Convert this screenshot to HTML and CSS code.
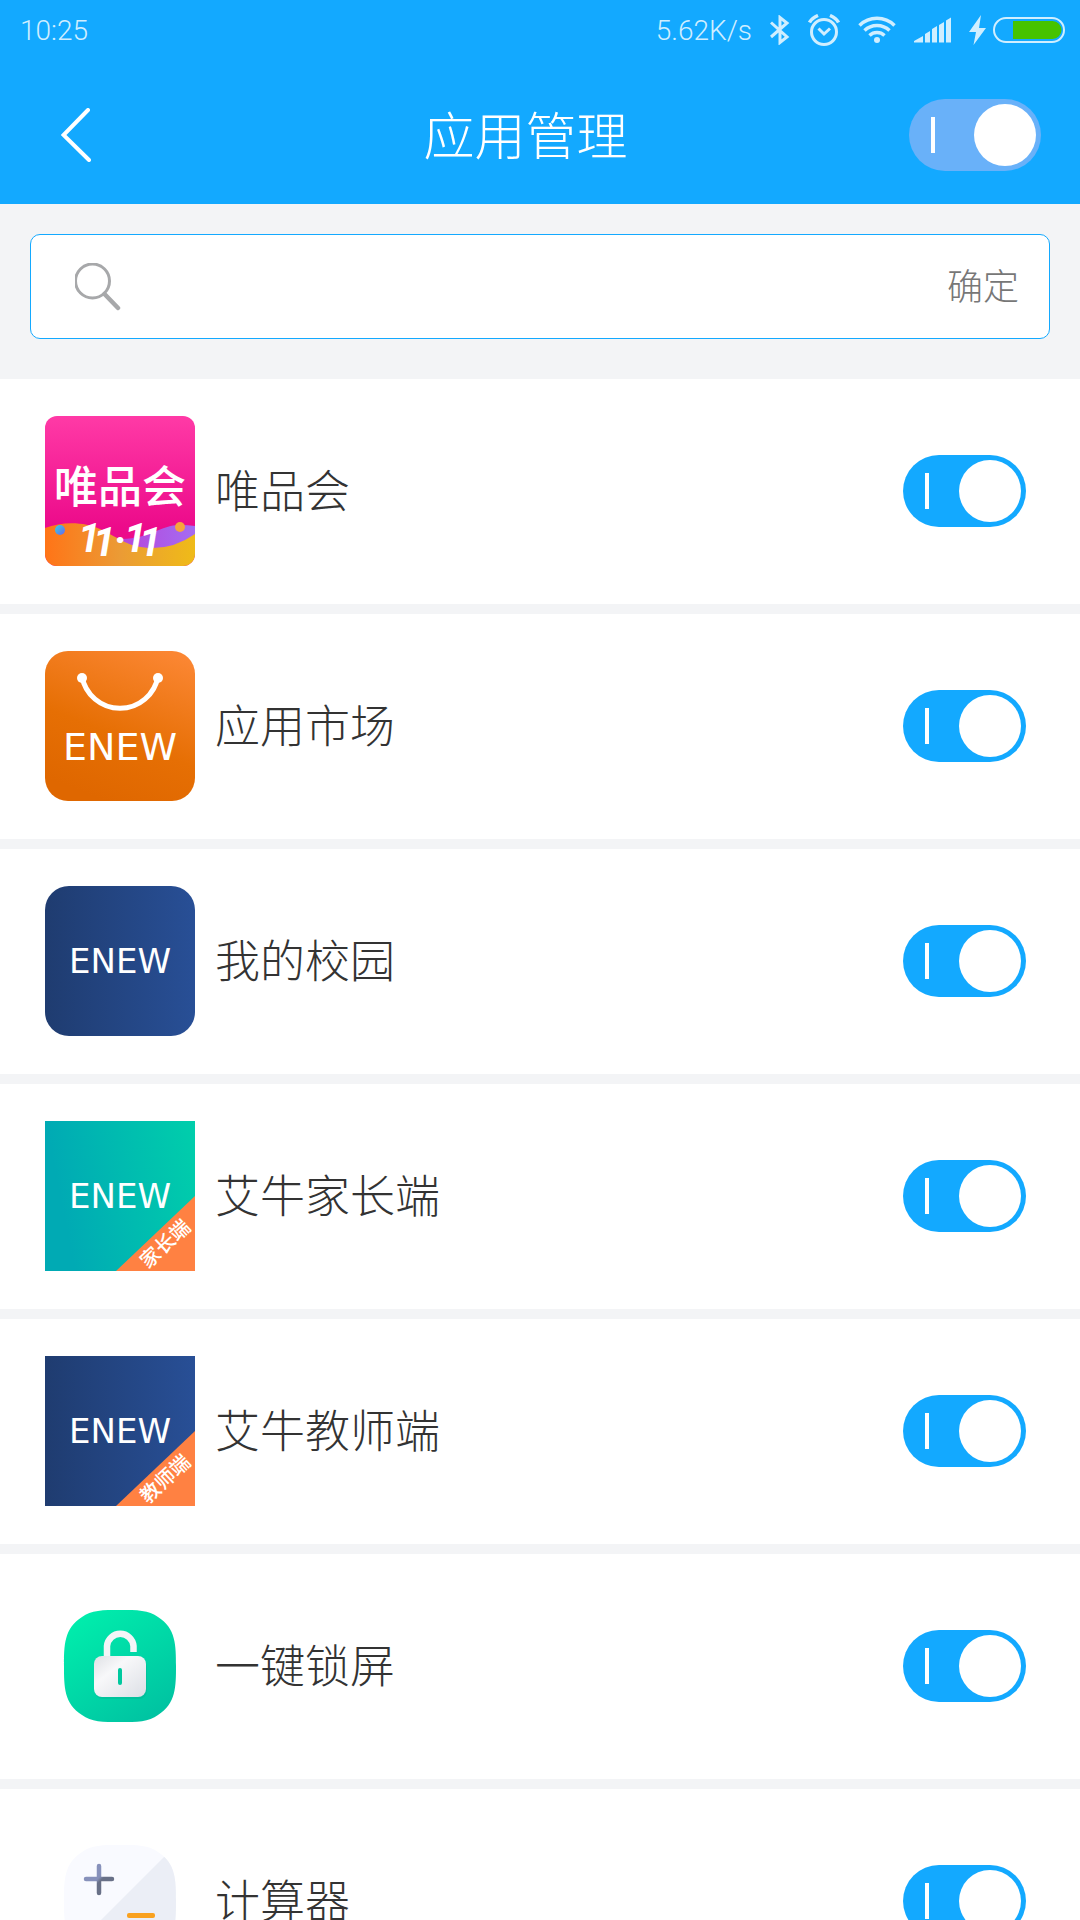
FILE: index.html
```html
<!DOCTYPE html>
<html lang="zh-CN">
<head>
<meta charset="utf-8">
<meta name="viewport" content="width=device-width, initial-scale=1">
<title>应用管理</title>
<link rel="stylesheet" href="styles.css">
</head>
<body>
<header class="top">
  <div class="status">
    <span>10:25</span>
    <div class="status-icons">
      <span>5.62K/s</span>
      <svg width="20" height="30" viewBox="0 0 20 30" fill="none" stroke="currentColor" stroke-width="3"><path d="M1 7.500 17 22 10 27.500V2.500L17 8 1 22"/></svg>
      <svg width="32" height="32" viewBox="0 0 32 32" fill="none" stroke="currentColor" stroke-width="3"><circle cx="16" cy="18" r="12.500"/><path d="M10.500 14.500 16 20l6-5.500"/><path d="M1.500 8.500Q4 4 10 1.500M30.500 8.500Q28 4 22 1.500" stroke-width="3.500"/></svg>
      <svg width="38" height="28" viewBox="0 0 38 28" fill="none" stroke="currentColor" stroke-width="3.500"><path d="M1.500 9.500a25 25 0 0 1 35 0M6.500 14.500a18 18 0 0 1 25 0M11.500 19.500a11 11 0 0 1 15 0"/><circle cx="19" cy="24" r="3" fill="currentColor" stroke="none"/></svg>
      <svg width="37" height="26" viewBox="0 0 37 26" fill="currentColor"><path d="M0 25.500V24l9-5v6.500zM11 17l5-3v11.500h-5zM18 12l5-3v16.500h-5zM25 8l5-3v20.500h-5zM32 3.500 37 .5v25h-5z"/></svg>
      <span class="power">
        <svg width="17" height="30" viewBox="0 0 17 30" fill="currentColor"><path d="M12 0 0 17h7L4.500 30 17 13h-7z"/></svg>
        <svg width="72" height="26" viewBox="0 0 72 26"><rect x="1" y="1" width="70" height="24" rx="12" fill="none" stroke="currentColor" stroke-width="2"/><path d="M20 4h39.500a9 9 0 0 1 0 18H20z" fill="#46c300"/></svg>
      </span>
    </div>
  </div>
  <div class="title-bar">
    <button class="back" type="button" aria-label="返回">
      <svg width="30" height="54" viewBox="0 0 30 54" fill="none" stroke="currentColor" stroke-width="4" stroke-linecap="round"><path d="M27 2 2.500 27 28 52"/></svg>
    </button>
    <h1>应用管理</h1>
    <input class="switch switch-all" type="checkbox" checked aria-label="应用管理">
  </div>
</header>

<form class="search">
  <label class="search-box">
    <svg width="46" height="48" viewBox="0 0 46 48" fill="none" stroke="#a7a8aa" stroke-linecap="round"><circle cx="17.500" cy="18" r="17" stroke-width="3"/><path d="m29.500 31 13.500 14" stroke-width="4.500"/></svg>
    <input type="search" aria-label="搜索应用">
    <button type="button">确定</button>
  </label>
</form>

<ul class="apps">
  <li>
    <svg class="icon" viewBox="0 0 150 150">
      <defs>
        <linearGradient id="pink" x2="0" y2="1"><stop stop-color="#ff3aa6"/><stop offset=".75" stop-color="#ec0a8a"/></linearGradient>
        <linearGradient id="wave"><stop stop-color="#ff7417"/><stop offset=".5" stop-color="#eb9b35"/><stop offset="1" stop-color="#efbb18"/></linearGradient>
        <linearGradient id="violet"><stop stop-color="#b93fd6"/><stop offset="1" stop-color="#a46cf2"/></linearGradient>
        <linearGradient id="bead" x2="1" y2="1"><stop stop-color="#36d3e6"/><stop offset="1" stop-color="#6a63ee"/></linearGradient>
        <clipPath id="round"><rect width="150" height="150" rx="12"/></clipPath>
      </defs>
      <g clip-path="url(#round)">
        <rect width="150" height="150" fill="url(#pink)"/>
        <path d="M66 122C100 127 113 109 135 109q8 0 15 1v30H80z" fill="url(#violet)"/>
        <path d="M0 112C18 105 40 106 55 113 76 123 84 132 108 132q22 0 42-14v32H0z" fill="url(#wave)"/>
        <circle cx="15" cy="114" r="5" fill="url(#bead)"/>
        <circle cx="135" cy="111" r="5" fill="#f6a43c"/>
      </g>
      <text class="vip" x="75" y="87">唯品会</text>
      <text class="eleven" x="33 48 69 79 94" y="136 140 138 136 140">11·11</text>
    </svg>
    <label for="app1">唯品会</label>
    <input class="switch" type="checkbox" id="app1" checked>
  </li>
  <li>
    <svg class="icon" viewBox="0 0 150 150">
      <defs><linearGradient id="orange" x1=".8" y1="0" x2=".4" y2="1"><stop stop-color="#fb8632"/><stop offset=".6" stop-color="#e66f04"/><stop offset="1" stop-color="#df6700"/></linearGradient></defs>
      <rect width="150" height="150" rx="23" fill="url(#orange)"/>
      <path d="M37 28a38.500 38.500 0 0 0 76 0" transform="translate(0 -3)" fill="none" stroke="#fff" stroke-width="5"/>
      <circle cx="37" cy="27" r="5" fill="#fff"/><circle cx="113" cy="27" r="5" fill="#fff"/>
      <text class="brand brand-large" x="75" y="109">ENEW</text>
    </svg>
    <label for="app2">应用市场</label>
    <input class="switch" type="checkbox" id="app2" checked>
  </li>
  <li>
    <svg class="icon" viewBox="0 0 150 150">
      <defs><linearGradient id="navy"><stop stop-color="#1f3c70"/><stop offset="1" stop-color="#284f96"/></linearGradient></defs>
      <rect width="150" height="150" rx="24" fill="url(#navy)"/>
      <text class="brand" x="75" y="87">ENEW</text>
    </svg>
    <label for="app3">我的校园</label>
    <input class="switch" type="checkbox" id="app3" checked>
  </li>
  <li>
    <svg class="icon" viewBox="0 0 150 150">
      <defs><linearGradient id="teal" x2="1" y2="-.2"><stop stop-color="#00aab4"/><stop offset="1" stop-color="#00d0ab"/></linearGradient></defs>
      <rect width="150" height="150" fill="url(#teal)"/>
      <path d="M71 150 150 75v75z" fill="#ff8142"/>
      <text class="brand" x="75" y="87">ENEW</text>
      <text class="ribbon" transform="translate(125 128) rotate(-43)">家长端</text>
    </svg>
    <label for="app4">艾牛家长端</label>
    <input class="switch" type="checkbox" id="app4" checked>
  </li>
  <li>
    <svg class="icon" viewBox="0 0 150 150">
      <rect width="150" height="150" fill="url(#navy)"/>
      <path d="M71 150 150 75v75z" fill="#ff8142"/>
      <text class="brand" x="75" y="87">ENEW</text>
      <text class="ribbon" transform="translate(125 128) rotate(-43)">教师端</text>
    </svg>
    <label for="app5">艾牛教师端</label>
    <input class="switch" type="checkbox" id="app5" checked>
  </li>
  <li>
    <svg class="icon" viewBox="0 0 150 150">
      <defs>
        <linearGradient id="green" x2=".7" y2="1"><stop stop-color="#00f2ad"/><stop offset="1" stop-color="#00c4a2"/></linearGradient>
        <linearGradient id="steel" x2="1" y2="1"><stop stop-color="#dfe1e5"/><stop offset=".35" stop-color="#f8f8fa"/><stop offset="1" stop-color="#dcdfe5"/></linearGradient>
      </defs>
      <path d="M75 19C92 19 104 19 113 26 131 37 131 55 131 75S131 113 113 124C104 131 92 131 75 131S46 131 37 124C19 113 19 95 19 75S19 37 37 26C46 19 58 19 75 19z" fill="url(#green)"/>
      <rect x="50" y="68" width="52" height="40" rx="8" fill="#00a98c" opacity=".3"/>
      <path d="M62 70V55a13.300 13.300 0 0 1 26.500 0v6" fill="none" stroke="#f3f5f7" stroke-width="6.500"/>
      <rect x="49" y="65" width="52" height="41" rx="8" fill="url(#steel)"/>
      <rect x="73" y="77" width="4" height="17" rx="2" fill="#00c99f"/>
    </svg>
    <label for="app6">一键锁屏</label>
    <input class="switch" type="checkbox" id="app6" checked>
  </li>
  <li>
    <svg class="icon" viewBox="0 0 150 150">
      <defs>
        <clipPath id="tile"><path d="M75 19C92 19 104 19 113 26 131 37 131 55 131 75S131 113 113 124C104 131 92 131 75 131S46 131 37 124C19 113 19 95 19 75S19 37 37 26C46 19 58 19 75 19z"/></clipPath>
        <linearGradient id="slate" gradientUnits="userSpaceOnUse" x1="46" y1="45" x2="62" y2="61"><stop offset=".45" stop-color="#8791bb"/><stop offset=".6" stop-color="#687087"/></linearGradient>
      </defs>
      <g clip-path="url(#tile)"><rect width="150" height="150" fill="#f9faff"/><path d="M150 0V150H0z" fill="#ebeef6"/></g>
      <path d="M54 40V67M41 53H67" stroke="url(#slate)" stroke-width="4.500" stroke-linecap="round"/>
      <rect x="82" y="87" width="28" height="5" rx="2" fill="#f9a11f"/>
    </svg>
    <label for="app7">计算器</label>
    <input class="switch" type="checkbox" id="app7" checked>
  </li>
</ul>
</body>
</html>
```
FILE: styles.css
```css
* {
  box-sizing: border-box;
}

body {
  margin: 0;
  height: 100vh;
  display: flex;
  flex-direction: column;
  overflow: hidden;
  background: #f3f4f6;
  color: #333;
  font-family: "Noto Sans CJK SC", sans-serif;
  font-weight: 300;
}

svg {
  display: block;
  flex: none;
}

button,
input {
  margin: 0;
  padding: 0;
  border: 0;
  background: none;
  color: inherit;
  font: inherit;
}

.top {
  flex: none;
  background: #13a9ff;
  color: #fff;
}

.status {
  display: flex;
  align-items: center;
  justify-content: space-between;
  height: 66px;
  padding: 0 15px 6px 20px;
  color: #d0eeff;
  font-family: Roboto, sans-serif;
  font-size: 28px;
}

.status-icons {
  display: flex;
  align-items: center;
  gap: 18px;
}

.power {
  display: flex;
  align-items: center;
  gap: 7px;
}

.title-bar {
  display: grid;
  grid-template-columns: 142px 1fr 171px;
  align-items: center;
  height: 138px;
}

.back {
  display: flex;
  align-items: center;
  height: 100%;
  padding-left: 61px;
}

h1 {
  margin: 0;
  padding-bottom: 5px;
  font-size: 51px;
  font-weight: 300;
  line-height: 72px;
  text-align: center;
}

.switch {
  appearance: none;
  position: relative;
  flex: none;
  width: 123px;
  height: 72px;
  border-radius: 36px;
  background: #13a9ff;
}

.switch::before {
  content: "";
  position: absolute;
  top: 18px;
  left: 22px;
  width: 4px;
  height: 36px;
  background: #fff;
}

.switch::after {
  content: "";
  position: absolute;
  top: 5px;
  right: 5px;
  width: 62px;
  height: 62px;
  border-radius: 50%;
  background: #fff;
}

.switch:not(:checked) {
  background: #c8ccd2;
}

.switch:not(:checked)::before {
  left: auto;
  right: 22px;
}

.switch:not(:checked)::after {
  right: auto;
  left: 5px;
}

.switch-all {
  width: 132px;
  background: #69b1f9;
}

.search {
  flex: none;
  padding: 30px 30px 40px;
}

.search-box {
  display: flex;
  align-items: center;
  gap: 20px;
  height: 105px;
  padding: 0 30px 0 44px;
  border: 1px solid #13a9ff;
  border-radius: 10px;
  background: #fff;
}

.search-box input {
  flex: 1;
  min-width: 0;
  height: 100%;
  outline: 0;
  font-size: 36px;
}

.search-box button {
  padding-bottom: 5px;
  color: #777;
  font-size: 36px;
  line-height: 54px;
}

.apps {
  flex: 1;
  min-height: 0;
  display: flex;
  flex-direction: column;
  gap: 10px;
  margin: 0;
  padding: 0;
  overflow-y: auto;
  scrollbar-width: none;
  list-style: none;
}

.apps li {
  flex: none;
  display: flex;
  align-items: center;
  gap: 20px;
  height: 225px;
  padding: 0 54px 1px 45px;
  background: #fff;
}

.apps label {
  flex: 1;
  padding-bottom: 4px;
  font-size: 45px;
  line-height: 66px;
}

.icon {
  width: 150px;
  height: 150px;
  overflow: visible;
}

.icon text {
  fill: #fff;
  text-anchor: middle;
}

.icon .vip {
  font-size: 44px;
  font-weight: 500;
}

.icon .eleven {
  font-family: Roboto, sans-serif;
  font-size: 40px;
  font-style: italic;
  font-weight: 700;
  text-anchor: start;
}

.icon .brand {
  font-family: "DejaVu Sans", sans-serif;
  font-size: 34px;
  font-weight: 400;
}

.icon .brand-large {
  font-size: 38px;
}

.icon .ribbon {
  font-size: 20px;
  font-weight: 500;
}
```
